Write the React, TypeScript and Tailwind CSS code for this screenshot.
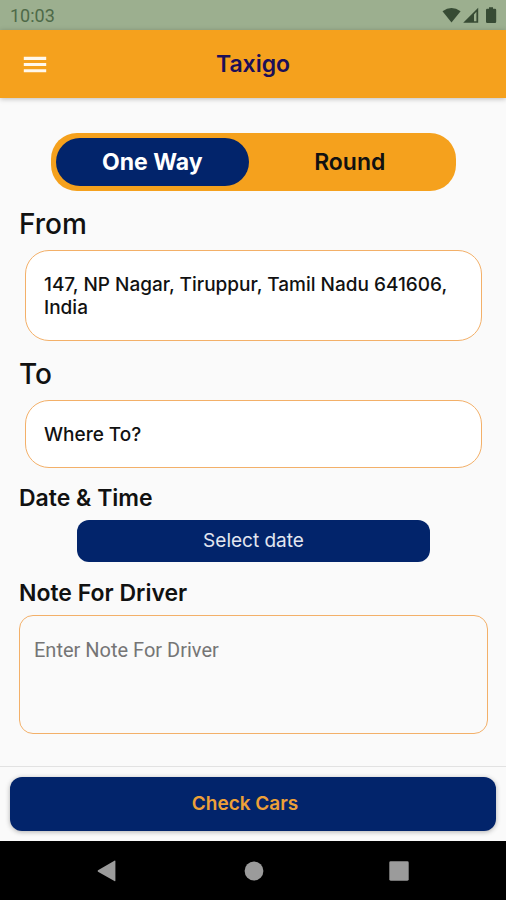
import { useState } from 'react';

const trips = ['One Way', 'Round'];

function StatusBar() {
  return (
    <div className="flex h-[30px] items-center justify-between bg-[#9caf8f] pl-[10px] pr-2 pt-[2px] font-[Roboto,sans-serif] text-[18px] leading-5 text-[#4e6a48]">
      <span>10:03</span>
      <svg width="56" height="18" viewBox="0 0 56 18" fill="#374b34" aria-hidden="true">
        <path d="M0.5 4.2Q9.5-2.2 18.6 4.2L9.5 15.4Z" />
        <path d="M36.2 0.8V15.8H21.2ZM34.4 4.8L32 7.4V14.2H34.4Z" fillRule="evenodd" />
        <path d="M47 0.2H51V1.8H53Q54.2 1.8 54.2 3V14.8Q54.2 16 53 16H45.2Q44 16 44 14.8V3Q44 1.8 45.2 1.8H47Z" />
      </svg>
    </div>
  );
}

function NavBar() {
  return (
    <nav className="flex h-[59px] items-center justify-around bg-black px-[34px]">
      <button type="button" aria-label="Back">
        <svg width="22" height="22" viewBox="0 0 22 22" fill="#9b9b9b">
          <path d="M18.4 1.2V20.6Q18.4 21.6 17.4 21L1 11.8Q0.2 11 1 10.2L17.4 0.8Q18.4 0.3 18.4 1.2Z" />
        </svg>
      </button>
      <button type="button" aria-label="Home">
        <svg width="20" height="20" viewBox="0 0 20 20" fill="#9b9b9b">
          <circle cx="10" cy="10" r="9.4" />
        </svg>
      </button>
      <button type="button" aria-label="Recent apps">
        <svg width="20" height="20" viewBox="0 0 20 20" fill="#9b9b9b">
          <rect x="0.3" y="0.3" width="19.4" height="19.4" rx="1.4" />
        </svg>
      </button>
    </nav>
  );
}

export default function App() {
  const [trip, setTrip] = useState('One Way');
  const [from, setFrom] = useState('147, NP Nagar, Tiruppur, Tamil Nadu 641606, India');
  const [to, setTo] = useState('');
  const [note, setNote] = useState('');

  return (
    <div className="flex min-h-screen flex-col bg-[#fafafa] font-[Inter,sans-serif] text-[#111111]">
      <StatusBar />

      {/* App bar */}
      <header className="z-10 grid h-[68px] grid-cols-[1fr_auto_1fr] items-center bg-[#f5a11d] px-5 shadow-[0_1px_5px_rgba(0,0,0,0.25)]">
        <button type="button" aria-label="Menu" className="justify-self-start">
          <svg width="30" height="30" viewBox="0 0 30 30" fill="#fff8ec">
            <path d="M3.8 7.8H26.2V10.9H3.8ZM3.8 14H26.2V17.1H3.8ZM3.8 20.2H26.2V23.3H3.8Z" />
          </svg>
        </button>
        <h1 className="text-[23px] font-semibold leading-7 text-[#1c0f58]">Taxigo</h1>
      </header>

      <main className="flex flex-1 flex-col pb-8 pl-[19px] pr-[18px] pt-[35px]">
        {/* Trip type */}
        <div className="mx-8 grid h-[58px] grid-cols-2 rounded-[26px] bg-[#f5a11d] p-[5px]">
          {trips.map((name) => (
            <button
              key={name}
              type="button"
              aria-pressed={trip === name}
              onClick={() => setTrip(name)}
              className={`mr-[5px] rounded-3xl text-[23px] leading-7 ${
                trip === name ? 'bg-[#02246b] font-bold text-white' : 'font-semibold'
              }`}
            >
              {name}
            </button>
          ))}
        </div>

        <label htmlFor="from" className="mt-[17px] text-[28px] font-medium leading-8">
          From
        </label>
        <textarea
          id="from"
          rows={2}
          value={from}
          onChange={(e) => setFrom(e.target.value)}
          className="mx-[6px] mt-[10px] resize-none overflow-hidden rounded-3xl border border-[#f3b069] bg-white pb-[21px] pl-[18px] pr-[18px] pt-[22px] text-[19px] font-medium leading-[23px] outline-none"
        />

        <label htmlFor="to" className="mt-[17px] text-[28px] font-medium leading-8">
          To
        </label>
        <input
          id="to"
          type="text"
          placeholder="Where To?"
          value={to}
          onChange={(e) => setTo(e.target.value)}
          className="mx-[6px] mt-[10px] rounded-3xl border border-[#f3b069] bg-white pb-[21px] pl-[18px] pr-[18px] pt-[22px] text-[19px] font-medium leading-[23px] outline-none placeholder:text-[#111111]"
        />

        <h2 className="mt-4 text-[23px] font-semibold leading-7">Date &amp; Time</h2>
        <button
          type="button"
          className="mx-[58px] mt-2 h-[42px] rounded-[12px] bg-[#02246b] text-[19px] leading-6 text-[#e3e6f0]"
        >
          Select date
        </button>

        <label htmlFor="note" className="mt-[17px] text-[23px] font-semibold leading-7">
          Note For Driver
        </label>
        <textarea
          id="note"
          placeholder="Enter Note For Driver"
          value={note}
          onChange={(e) => setNote(e.target.value)}
          className="mt-2 h-[119px] resize-none rounded-[14px] border border-[#f3b069] bg-transparent px-[14px] py-[22px] font-[Roboto,sans-serif] text-[20px] leading-6 outline-none placeholder:text-[#757575]"
        />
      </main>

      <footer className="border-t border-[#e2e2e2] bg-[#fafafa] px-[10px] py-[10px]">
        <button
          type="button"
          className="h-[54px] w-full rounded-[12px] bg-[#02246b] pr-4 text-[19px] font-semibold leading-6 text-[#eda038] shadow-[0_1px_5px_rgba(0,0,0,0.3)]"
        >
          Check Cars
        </button>
      </footer>

      <NavBar />
    </div>
  );
}
